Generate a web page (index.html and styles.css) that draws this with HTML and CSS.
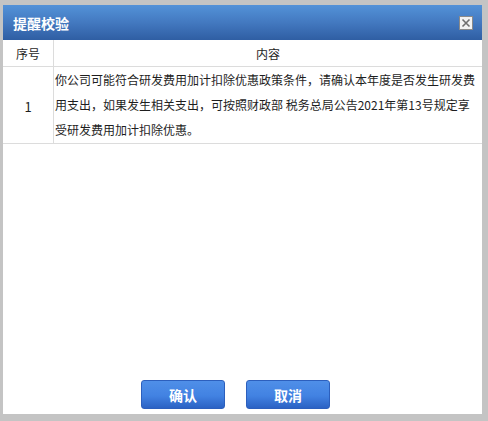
FILE: index.html
```html
<!DOCTYPE html>
<html lang="zh">
<head>
<meta charset="utf-8">
<title>提醒校验</title>
<link rel="stylesheet" href="styles.css">
</head>
<body>
<div class="dialog">
  <div class="header">
    <span class="title">提醒校验</span>
    <span class="close">
      <svg width="12" height="12" viewBox="0 0 12 12"><path d="M2.5 2.5 L9.5 9.5 M9.5 2.5 L2.5 9.5" stroke="#6f6f6f" stroke-width="1.6" fill="none"/></svg>
    </span>
  </div>
  <table class="grid">
    <thead>
      <tr><th class="col-no">序号</th><th>内容</th></tr>
    </thead>
    <tbody>
      <tr>
        <td class="col-no num">1</td>
        <td class="content">你公司可能符合研发费用加计扣除优惠政策条件，请确认本年度是否发生研发费用支出，如果发生相关支出，可按照财政部 税务总局公告2021年第13号规定享受研发费用加计扣除优惠。</td>
      </tr>
    </tbody>
  </table>
  <div class="spacer"></div>
  <div class="footer">
    <button class="btn">确认</button>
    <button class="btn">取消</button>
  </div>
</div>
</body>
</html>
```
FILE: styles.css
```css
html, body {
  margin: 0;
  padding: 0;
}
body {
  background: #c4c4c4;
  font-family: "Microsoft YaHei", "Noto Sans CJK SC", "Noto Sans", sans-serif;
  width: 488px;
  height: 421px;
  overflow: hidden;
}
.dialog {
  box-sizing: border-box;
  margin: 5px 6px 0 3px;
  width: 479px;
  height: 409px;
  background: #fff;
  display: flex;
  flex-direction: column;
}
.header {
  height: 35px;
  flex: none;
  background: linear-gradient(to bottom, #5392d8 0%, #4379c0 50%, #2f5ea3 100%);
  display: flex;
  align-items: center;
  justify-content: space-between;
  padding: 0 9px 0 10px;
}
.title {
  color: #fff;
  font-size: 14px;
  font-weight: bold;
  line-height: 20px;
}
.close {
  box-sizing: border-box;
  width: 14px;
  height: 14px;
  background: #f2f2f2;
  border: 1px solid #8a8a8a;
  display: flex;
  align-items: center;
  justify-content: center;
}
.grid {
  width: 100%;
  border-collapse: collapse;
  font-size: 12px;
  color: #1e1e1e;
}
.grid th {
  font-weight: normal;
  height: 25px;
  padding: 1px 0 0;
  border-bottom: 1px solid #dcdcdc;
  text-align: center;
}
.grid td {
  padding: 0;
  border-bottom: 1px solid #dcdcdc;
  text-align: center;
  vertical-align: middle;
}
.grid .col-no {
  width: 50px;
  border-right: 1px solid #dcdcdc;
}
.grid td.num {
  font-size: 13px;
  padding-top: 2px;
}
.grid td.content {
  text-align: left;
  line-height: 25px;
  padding: 0 6px 1px 1px;
}
.spacer {
  flex: 1;
}
.footer {
  flex: none;
  display: flex;
  justify-content: center;
  gap: 21px;
  padding: 0 14px 5px 0;
}
.btn {
  width: 84px;
  height: 29px;
  border: 1px solid #2c5fbd;
  border-radius: 3px;
  background: linear-gradient(to bottom, #4f8fe8 0%, #4282e2 55%, #2b62c4 100%);
  color: #fff;
  font-family: "Microsoft YaHei", "Noto Sans CJK SC", sans-serif;
  font-size: 14px;
  font-weight: bold;
  padding: 0;
  cursor: pointer;
}
```
